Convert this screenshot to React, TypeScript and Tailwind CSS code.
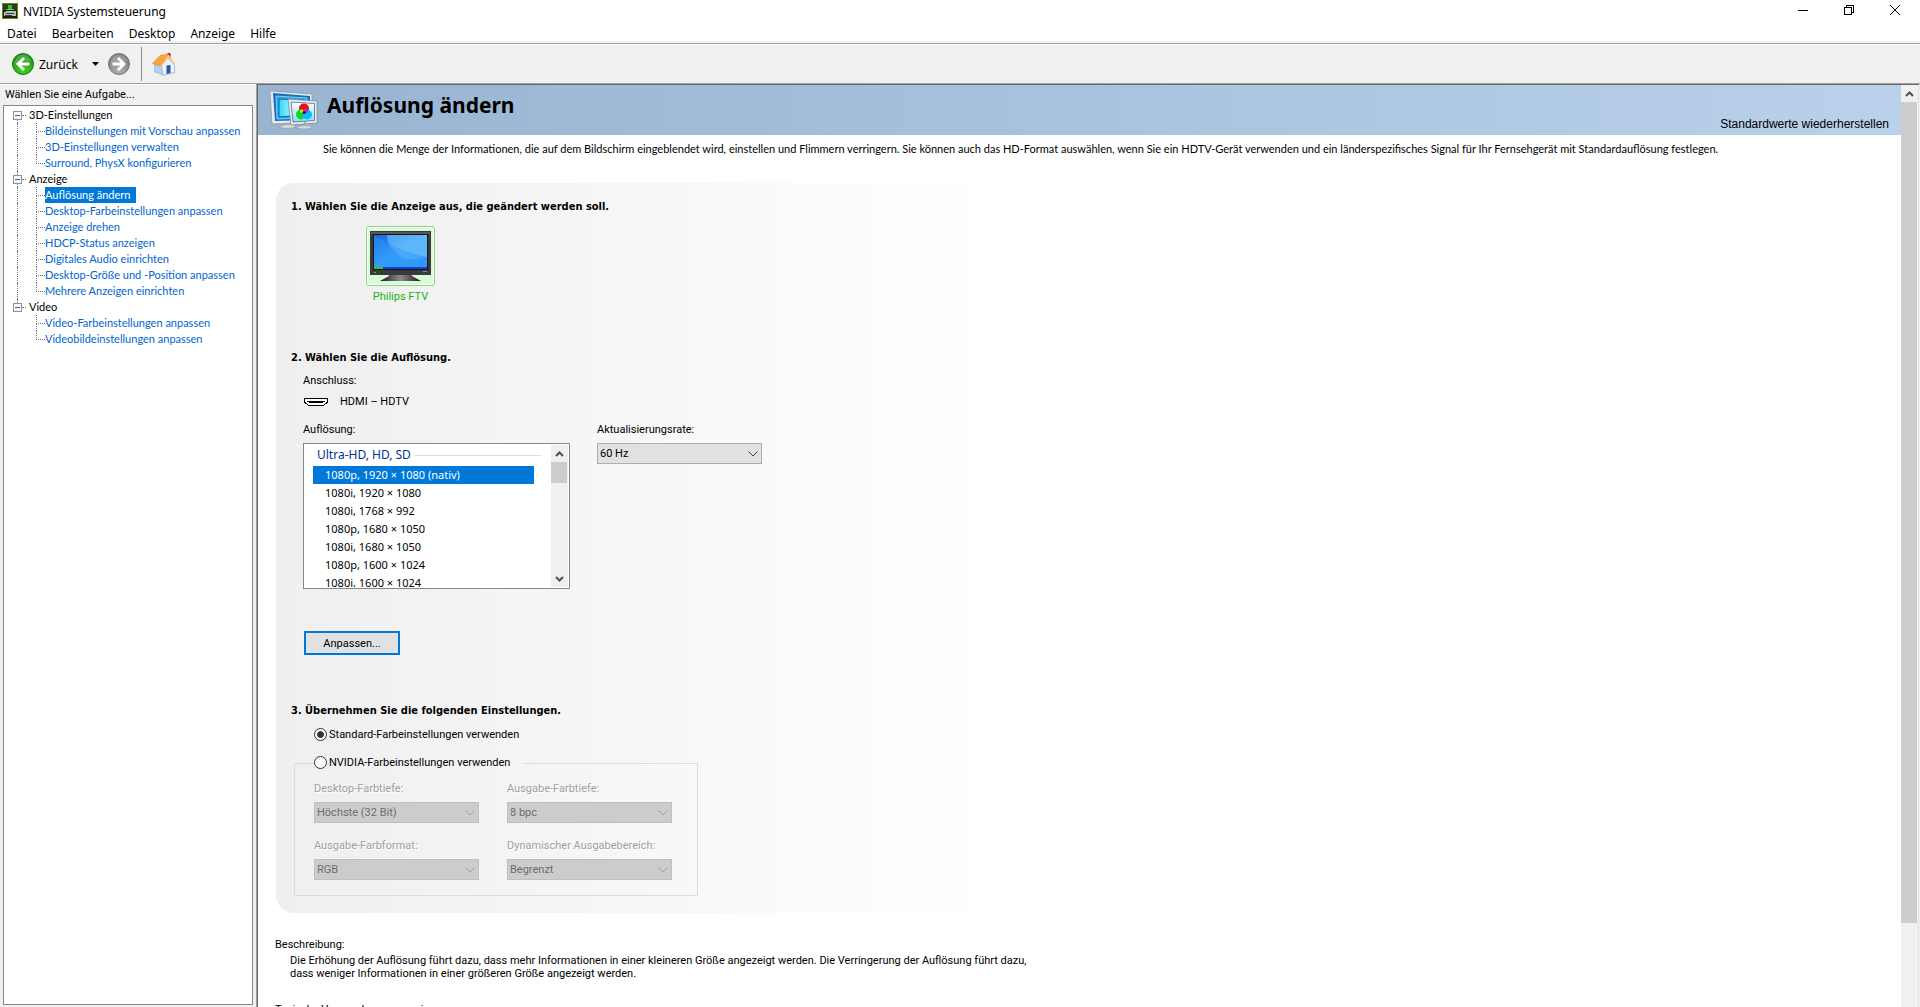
import React, { useState } from "react";
import clsx from "clsx";

const MENU = ["Datei", "Bearbeiten", "Desktop", "Anzeige", "Hilfe"];

const TREE = [
  {
    title: "3D-Einstellungen",
    items: [
      "Bildeinstellungen mit Vorschau anpassen",
      "3D-Einstellungen verwalten",
      "Surround, PhysX konfigurieren",
    ],
  },
  {
    title: "Anzeige",
    items: [
      "Auflösung ändern",
      "Desktop-Farbeinstellungen anpassen",
      "Anzeige drehen",
      "HDCP-Status anzeigen",
      "Digitales Audio einrichten",
      "Desktop-Größe und -Position anpassen",
      "Mehrere Anzeigen einrichten",
    ],
  },
  {
    title: "Video",
    items: ["Video-Farbeinstellungen anpassen", "Videobildeinstellungen anpassen"],
  },
];

const RESOLUTIONS = [
  "1080p, 1920 × 1080 (nativ)",
  "1080i, 1920 × 1080",
  "1080i, 1768 × 992",
  "1080p, 1680 × 1050",
  "1080i, 1680 × 1050",
  "1080p, 1600 × 1024",
  "1080i, 1600 × 1024",
];

function AppIcon() {
  return (
    <svg width="16" height="16" viewBox="0 0 16 16" aria-hidden="true">
      <rect x="0.5" y="0.5" width="15" height="15" fill="#1c1c1c" stroke="#5f9200" />
      <path d="M1 1h14v6H1z" fill="#2f3a26" />
      <path d="M6 2h4v4H6z" fill="#35c41d" />
      <path d="M4 6h8v1H4z" fill="#4be02c" />
      <path d="M2 9h2V8h10v5H2z" fill="#b9bdb6" />
      <path d="M4 10h8v1H4zM3 12h7v1H3z" fill="#3a3c39" />
    </svg>
  );
}

function RoundArrow({ forward = false }: { forward?: boolean }) {
  const id = forward ? "fwd" : "back";
  return (
    <svg width="24" height="24" viewBox="0 0 24 24" aria-hidden="true">
      <defs>
        <radialGradient id={id} cx="50%" cy="80%" r="75%">
          <stop offset="0" stopColor={forward ? "#b4b4b4" : "#45d321"} />
          <stop offset="1" stopColor={forward ? "#777777" : "#188d12"} />
        </radialGradient>
      </defs>
      <circle cx="12" cy="12" r="10.5" fill={`url(#${id})`} stroke={forward ? "#757575" : "#128010"} />
      <path
        d="M4 11a8 8 0 0 1 16-1C15 8 9 9 4 13z"
        fill="#fff"
        opacity="0.2"
      />
      <path
        d={forward ? "M5.500 12h11M11 6l6 6-6 6" : "M18.500 12h-11M13 6l-6 6 6 6"}
        fill="none"
        stroke="#fff"
        strokeWidth="2.800"
      />
    </svg>
  );
}

function HomeIcon() {
  return (
    <svg width="24" height="24" viewBox="0 0 24 24" aria-hidden="true">
      <path d="M15.500 1h3v7h-3z" fill="#a8211c" />
      <path d="M2.500 12.500L9.500 13l1.500 10-8.500-3z" fill="#a9d6f6" stroke="#8fb4d8" strokeWidth="0.600" />
      <path d="M9.500 13.500L16 6l6.500 7v7.500L11 23.500z" fill="#eaf4fe" stroke="#88a8d4" strokeWidth="0.700" />
      <path d="M14.500 13.500l4-.500V21l-4 1z" fill="#31549a" />
      <path d="M.500 11.500L8 3.500l8.500-1.500-8 12z" fill="#fba63c" stroke="#e8892a" strokeWidth="0.700" />
      <path d="M16.500 2.500l7 9.500-1.500.800L16 5.800 9.500 14.500l-1.200-.500z" fill="#f7c58a" />
    </svg>
  );
}

function DisplaysIcon() {
  return (
    <svg width="48" height="40" viewBox="0 0 48 40" aria-hidden="true">
      <defs>
        <linearGradient id="screenBack" x1="0" x2="1">
          <stop offset="0" stopColor="#35d6f5" />
          <stop offset="0.600" stopColor="#a9fbff" />
          <stop offset="1" stopColor="#2e9be6" />
        </linearGradient>
        <linearGradient id="screenFront" x1="0" y1="0" x2="0" y2="1">
          <stop offset="0" stopColor="#ffffff" />
          <stop offset="1" stopColor="#8adcf8" />
        </linearGradient>
      </defs>
      <path d="M8 36q9-4 18-2l-3 3q-8 1-15-1z" fill="#d9dcdf" stroke="#8a8f94" strokeWidth="0.500" />
      <path d="M0 0l42 3v28L2 33z" fill="#e9ebed" stroke="#8a8f94" strokeWidth="0.700" />
      <path d="M3 2l37 3v24L5 30z" fill="#1270c0" />
      <path d="M6 5l31 2v20L7 28z" fill="#2ba7e6" stroke="#a8e6ff" strokeWidth="0.700" />
      <path d="M9 8l25 1v15l-25 2z" fill="url(#screenBack)" stroke="#0c62b4" />
      <path d="M25 37q8-4 15-2l2 2q-7 2-17 0z" fill="#d9dcdf" stroke="#8a8f94" strokeWidth="0.500" />
      <path d="M18 8l29 2v22l-26 2z" fill="#eceeef" stroke="#7f858b" strokeWidth="0.800" />
      <path d="M21 11l23.500 1.500v17L23 31z" fill="url(#screenFront)" stroke="#1c5f90" strokeWidth="0.700" />
      <circle cx="34" cy="17.500" r="5" fill="#f4071c" />
      <circle cx="31" cy="23.500" r="5" fill="#10d813" />
      <circle cx="37" cy="23.500" r="5" fill="#0bc0f2" />
      <path d="M30 19q3-1 4 1.500-1 2-3 1.500-1-1-1-3z" fill="#f0e000" />
      <path d="M38 19q-3-1-4 1.500 1 2 3 1.500 1-1 1-3z" fill="#d010d8" />
      <circle cx="34" cy="21.500" r="1.500" fill="#141450" />
      <path d="M34 31h2v1h-2z" fill="#4fe01a" />
    </svg>
  );
}

function TvIcon() {
  return (
    <svg width="61" height="50" viewBox="0 0 61 50" aria-hidden="true">
      <defs>
        <linearGradient id="tvScreen" x1="0" y1="0" x2="1" y2="1">
          <stop offset="0" stopColor="#1567d8" />
          <stop offset="0.500" stopColor="#3ca4fb" />
          <stop offset="1" stopColor="#2f9bfa" />
        </linearGradient>
        <linearGradient id="tvStand" x1="0" x2="1">
          <stop offset="0" stopColor="#1a1a1a" />
          <stop offset="0.500" stopColor="#8c8c8c" />
          <stop offset="1" stopColor="#1a1a1a" />
        </linearGradient>
      </defs>
      <path d="M19 43h23v2l9 5H10l9-5z" fill="url(#tvStand)" />
      <rect x="0" y="0" width="61" height="44" fill="#3a3a3a" />
      <rect x="1" y="1" width="59" height="2" fill="#585858" />
      <rect x="3" y="3" width="55" height="36" fill="#151515" />
      <rect x="4" y="4" width="53" height="32" fill="url(#tvScreen)" />
      <path d="M17 4h40v22q-12 3-22 2Q17 18 17 4z" fill="#7cc6ff" opacity="0.550" />
      <path d="M4 4q18 14 53 22v10H4z" fill="#2a94f8" opacity="0.450" />
      <rect x="4" y="36" width="53" height="2" fill="#1240d8" />
      <rect x="4" y="36" width="9" height="2" fill="#35c81e" />
      <path d="M4 41h2v1H4z" fill="#22dd22" />
      <path d="M53 40h4v1h-4z" fill="#8a8a8a" />
    </svg>
  );
}

function HdmiIcon() {
  return (
    <svg width="24" height="9" viewBox="0 0 24 9" shapeRendering="crispEdges" aria-hidden="true">
      <path d="M0.500 0.500h23v4l-2 1-2 2h-15l-2-2-2-1z" fill="#fff" stroke="#000" />
      <path d="M3 3h18v1h-2v1H5V4H3z" fill="#000" />
    </svg>
  );
}

function ScrollArrow({ up = false }: { up?: boolean }) {
  return (
    <span className="flex h-[17px] shrink-0 items-center justify-center text-[#505050]">
      <svg width="9" height="6" viewBox="0 0 9 6" aria-hidden="true">
        <path d={up ? "M1 5l3.500-3.500L8 5" : "M1 1l3.500 3.500L8 1"} fill="none" stroke="currentColor" strokeWidth="2" />
      </svg>
    </span>
  );
}

function WindowButtons() {
  return (
    <div className="flex h-[19px] pr-0.5">
      <button aria-label="Minimieren" className="flex w-[46px] items-center justify-center">
        <svg width="10" height="10" shapeRendering="crispEdges">
          <path d="M0 5h10v1H0z" />
        </svg>
      </button>
      <button aria-label="Verkleinern" className="flex w-[46px] items-center justify-center">
        <svg width="10" height="10" fill="none" stroke="#000" shapeRendering="crispEdges">
          <path d="M0.500 2.500h7v7h-7zM2.500 2.500v-2h7v7h-2" />
        </svg>
      </button>
      <button aria-label="Schließen" className="flex w-[46px] items-center justify-center">
        <svg width="10" height="10" stroke="#000">
          <path d="M0 0l10 10M10 0L0 10" />
        </svg>
      </button>
    </div>
  );
}

function TaskTree() {
  const [active, setActive] = useState("Auflösung ändern");

  return (
    <ul className="flex-1 border border-[#828790] bg-white pt-px font-[Lato,sans-serif]">
      {TREE.map((group, g) => {
        const lastGroup = g === TREE.length - 1;
        return (
          <li key={group.title}>
            <div className="flex h-4 items-center">
              <span className="flex w-[22px] flex-col items-end self-stretch pr-1">
                <span
                  className={clsx("mr-1 h-1 border-l border-dotted", g === 0 ? "border-transparent" : "border-gray-500")}
                />
                <svg width="9" height="9" shapeRendering="crispEdges" aria-hidden="true">
                  <rect x="0.500" y="0.500" width="8" height="8" fill="#f8f8f8" stroke="#919191" />
                  <path d="M2 4h5v1H2z" fill="#3b5aa3" />
                </svg>
                <span
                  className={clsx("mr-1 h-[3px] border-l border-dotted", lastGroup ? "border-transparent" : "border-gray-500")}
                />
              </span>
              <span className="-ml-1 mr-[3px] w-1 border-t border-dotted border-gray-500" />
              {group.title}
            </div>
            <ul>
              {group.items.map((item, i) => (
                <li key={item} className="flex h-4">
                  <span
                    className={clsx(
                      "ml-[13px] w-[19px] border-l border-dotted",
                      lastGroup ? "border-transparent" : "border-gray-500"
                    )}
                  />
                  <span className="flex w-[9px] flex-col">
                    <span className="h-[9px] border-b border-l border-dotted border-gray-500" />
                    {i < group.items.length - 1 && (
                      <span className="flex-1 border-l border-dotted border-gray-500" />
                    )}
                  </span>
                  <a
                    href="#"
                    onClick={() => setActive(item)}
                    className={clsx("whitespace-nowrap pr-1.5", item === active ? "bg-[#0078d7] text-white" : "text-[#0066cc]")}
                  >
                    {item}
                  </a>
                </li>
              ))}
            </ul>
          </li>
        );
      })}
    </ul>
  );
}

function SelectField({
  id,
  label,
  options,
  disabled = false,
}: {
  id: string;
  label: string;
  options: string[];
  disabled?: boolean;
}) {
  return (
    <div className="w-[165px]">
      <label
        htmlFor={id}
        className={clsx("block whitespace-nowrap", disabled && "text-[#a0a0a0] [text-shadow:1px_1px_0_#fff]")}
      >
        {label}
      </label>
      <div className="relative mt-[5px]">
        <select
          id={id}
          disabled={disabled}
          className={clsx(
            "block h-[21px] w-full appearance-none border pl-0.5 pt-px opacity-100",
            disabled ? "border-[#bfbfbf] bg-[#cccccc] text-[#6d6d6d]" : "border-[#adadad] bg-[#e1e1e1] text-black"
          )}
        >
          {options.map((o) => (
            <option key={o}>{o}</option>
          ))}
        </select>
        <svg
          width="10"
          height="6"
          viewBox="0 0 10 6"
          aria-hidden="true"
          className={clsx("pointer-events-none absolute right-1 top-2", disabled ? "text-[#a0a0a0]" : "text-[#404040]")}
        >
          <path d="M0.500 0.500L5 5l4.500-4.500" fill="none" stroke="currentColor" />
        </svg>
      </div>
    </div>
  );
}

function ResolutionList() {
  const [selected, setSelected] = useState(RESOLUTIONS[0]);

  return (
    <div className="mt-[5px] flex h-[146px] w-[267px] border border-[#828790] bg-white p-px font-['Noto_Sans',sans-serif]">
      <div className="flex-1 overflow-hidden pl-2">
        <div className="mb-px flex h-5 items-center gap-1 pl-1 pr-2.5 text-xs text-[#003399]">
          Ultra-HD, HD, SD
          <span className="h-px flex-1 bg-[#d5dfef]" />
        </div>
        <ul role="listbox" aria-labelledby="resolution-label" className="mr-[17px] leading-[18px]">
          {RESOLUTIONS.map((r) => (
            <li
              key={r}
              role="option"
              aria-selected={r === selected}
              onClick={() => setSelected(r)}
              className={clsx("h-[18px] pl-3", r === selected && "bg-[#0078d7] text-white")}
            >
              {r}
            </li>
          ))}
        </ul>
      </div>
      <div className="flex w-[17px] flex-col bg-[#f0f0f0]">
        <ScrollArrow up />
        <div className="mr-px h-[21px] bg-[#cdcdcd]" />
        <div className="flex-1" />
        <ScrollArrow />
      </div>
    </div>
  );
}

function Radio({ id, label, checked, onChange }: { id: string; label: string; checked: boolean; onChange: () => void }) {
  return (
    <span className="flex h-4 items-start gap-0.5">
      <input
        type="radio"
        name="color-source"
        id={id}
        checked={checked}
        onChange={onChange}
        className="mt-px size-[13px] appearance-none rounded-full border border-[#333333] bg-white bg-clip-content p-0.5 shadow-[inset_0_0_0_2px_#fff] checked:bg-[#333333]"
      />
      <label htmlFor={id}>{label}</label>
    </span>
  );
}

function SectionTitle({ children }: { children: React.ReactNode }) {
  return <h2 className="font-['DejaVu_Sans_Condensed',sans-serif] font-bold">{children}</h2>;
}

export default function App() {
  const [nvidiaColors, setNvidiaColors] = useState(false);

  return (
    <div className="flex h-screen flex-col overflow-hidden bg-[#f0f0f0] font-[Roboto,sans-serif] text-[11px] leading-4 text-black">
      {/* Title bar + menu */}
      <header className="bg-white font-['Noto_Sans',sans-serif] text-xs">
        <div className="flex h-6 items-start justify-between">
          <div className="flex items-start gap-[5px] pl-0.5 pt-[3px]">
            <AppIcon />
            <span className="pt-px">NVIDIA Systemsteuerung</span>
          </div>
          <WindowButtons />
        </div>
        <nav className="flex h-[17px] items-center gap-[15px] pl-[7px] pt-0.5">
          {MENU.map((m) => (
            <button key={m}>{m}</button>
          ))}
        </nav>
      </header>

      {/* Toolbar */}
      <div className="mt-0.5 border-y border-[#a0a0a0]">
        <div className="flex h-[39px] items-center border-t border-white pl-[11px] font-['Noto_Sans',sans-serif] text-xs">
          <button className="flex items-center gap-1">
            <RoundArrow />
            <span className="pt-px">Zurück</span>
          </button>
          <button aria-label="Verlauf" className="ml-[14px]">
            <svg width="7" height="4" aria-hidden="true">
              <path d="M0 0h7L3.500 4z" />
            </svg>
          </button>
          <button aria-label="Vor" className="ml-2">
            <RoundArrow forward />
          </button>
          <span className="ml-2.5 h-[34px] w-px bg-[#8c8c8c]" />
          <button aria-label="Startseite" className="ml-2.5">
            <HomeIcon />
          </button>
        </div>
      </div>

      <div className="flex min-h-0 flex-1 pr-px">
        <aside className="flex w-64 shrink-0 flex-col border-t border-white px-[3px] pb-0.5">
          <p className="h-5 pl-0.5 pt-0.5">Wählen Sie eine Aufgabe...</p>
          <TaskTree />
        </aside>

        <div className="flex min-w-0 flex-1 border-l border-[#a0a0a0]">
          <div className="flex min-w-0 flex-1 border-l border-t border-[#696969] bg-white">
            <main className="min-w-0 flex-1 overflow-hidden">
              <div className="flex h-[50px] justify-between bg-linear-to-r from-[#99b4d1] to-[#b9d1ea] pl-3 pr-3">
                <div className="flex gap-[9px] pt-1.5">
                  <DisplaysIcon />
                  <h1 className="font-['Noto_Sans',sans-serif] text-[21px] font-bold leading-7">Auflösung ändern</h1>
                </div>
                <button className="self-end pb-[3px] font-['Liberation_Sans',sans-serif] text-xs">
                  Standardwerte wiederherstellen
                </button>
              </div>

              <p className="whitespace-nowrap pl-[65px] pt-1.5 font-[Lato,sans-serif]">
                Sie können die Menge der Informationen, die auf dem Bildschirm eingeblendet wird, einstellen und
                Flimmern verringern. Sie können auch das HD-Format auswählen, wenn Sie ein HDTV-Gerät verwenden und ein
                länderspezifisches Signal für Ihr Fernsehgerät mit Standardauflösung festlegen.
              </p>

              <div className="ml-[18px] mt-[26px] max-w-[720px] rounded-[18px] bg-linear-to-r from-[#efefef] to-white pb-[17px] pl-[15px] pt-4">
                <SectionTitle>1. Wählen Sie die Anzeige aus, die geändert werden soll.</SectionTitle>
                <div className="ml-[75px] mt-[11px] flex w-[69px] flex-col items-center gap-[3px]">
                  <button
                    aria-label="Philips FTV"
                    className="flex h-[60px] w-full justify-center rounded-[3px] border border-[#86dc70] bg-[#d8fcd8] pt-1 shadow-[inset_0_0_0_1px_#fff]"
                  >
                    <TvIcon />
                  </button>
                  <span className="text-[#13b413]">Philips FTV</span>
                </div>

                <div className="mt-[45px]">
                  <SectionTitle>2. Wählen Sie die Auflösung.</SectionTitle>
                </div>
                <div className="pl-3">
                  <p className="mt-[7px]">Anschluss:</p>
                  <div className="mt-[5px] flex items-center gap-3 pl-px">
                    <HdmiIcon />
                    HDMI – HDTV
                  </div>
                  <div className="mt-3 flex gap-[27px]">
                    <div>
                      <p id="resolution-label">Auflösung:</p>
                      <ResolutionList />
                    </div>
                    <SelectField id="refresh" label="Aktualisierungsrate:" options={["60 Hz"]} />
                  </div>
                  <button className="ml-px mt-[42px] block h-6 w-24 border-2 border-[#0078d7] bg-[#e1e1e1] pt-px">
                    Anpassen...
                  </button>
                </div>

                <div className="mt-12">
                  <SectionTitle>3. Übernehmen Sie die folgenden Einstellungen.</SectionTitle>
                </div>
                <div className="mt-2 pl-[23px]">
                  <Radio
                    id="std"
                    label="Standard-Farbeinstellungen verwenden"
                    checked={!nvidiaColors}
                    onChange={() => setNvidiaColors(false)}
                  />
                </div>
                <fieldset className="ml-[3px] mt-3 w-[404px] border border-[#dcdcdc] pb-[15px] pl-[19px]">
                  <legend className="w-[210px]">
                    <Radio
                      id="nv"
                      label="NVIDIA-Farbeinstellungen verwenden"
                      checked={nvidiaColors}
                      onChange={() => setNvidiaColors(true)}
                    />
                  </legend>
                  <div className="grid grid-cols-[165px_165px] gap-x-7 gap-y-[15px] pt-2.5">
                    <SelectField id="depth" label="Desktop-Farbtiefe:" options={["Höchste (32 Bit)"]} disabled={!nvidiaColors} />
                    <SelectField id="out" label="Ausgabe-Farbtiefe:" options={["8 bpc"]} disabled={!nvidiaColors} />
                    <SelectField id="format" label="Ausgabe-Farbformat:" options={["RGB"]} disabled={!nvidiaColors} />
                    <SelectField
                      id="range"
                      label="Dynamischer Ausgabebereich:"
                      options={["Begrenzt"]}
                      disabled={!nvidiaColors}
                    />
                  </div>
                </fieldset>
              </div>

              <div className="mt-6 pl-[17px]">
                <p>Beschreibung:</p>
                <p className="mt-px max-w-[760px] pl-[15px] leading-[13px]">
                  Die Erhöhung der Auflösung führt dazu, dass mehr Informationen in einer kleineren Größe angezeigt
                  werden. Die Verringerung der Auflösung führt dazu, dass weniger Informationen in einer größeren Größe
                  angezeigt werden.
                </p>
                <p className="mt-[22px]">Typische Verwendungsszenarien:</p>
              </div>
            </main>

            {/* Scrollbar */}
            <div className="flex w-[18px] shrink-0 flex-col border-r border-[#e3e3e3] bg-[#f0f0f0]">
              <ScrollArrow up />
              <div className="mr-px h-[89%] shrink bg-[#cdcdcd]" />
              <div className="flex-1" />
            </div>
          </div>
        </div>
      </div>
    </div>
  );
}
